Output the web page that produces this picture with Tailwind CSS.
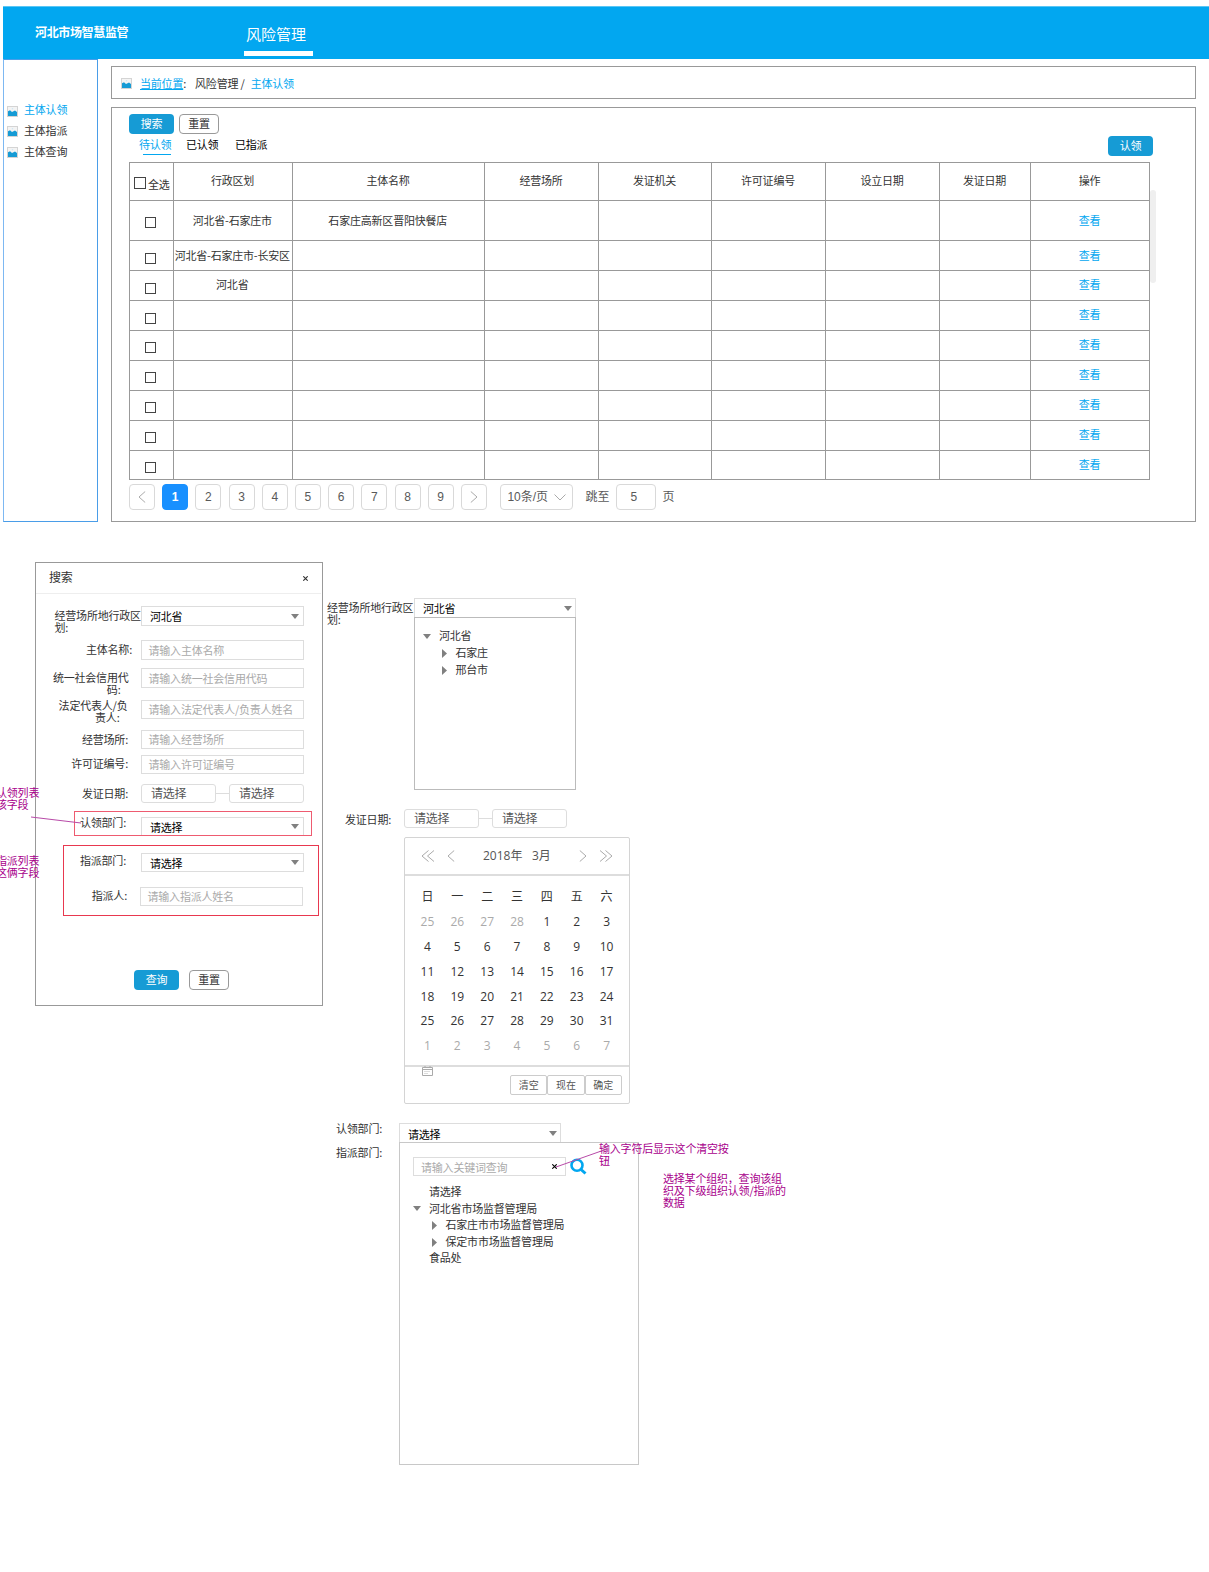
<!DOCTYPE html>
<html lang="zh-CN">
<head>
<meta charset="utf-8">
<title>风险管理 - 主体认领</title>
<script src="https://cdn.jsdelivr.net/npm/@tailwindcss/browser@4"></script>
</head>
<body class="relative h-[1572px] w-[1209px] overflow-hidden bg-white pt-[6px] font-['Noto_Sans_CJK_SC',sans-serif] text-[11px] leading-[12px] tracking-[-0.2px] text-[#333]">
<svg class="hidden">
  <symbol id="pic" viewBox="0 0 11 11"><rect x=".5" y=".5" width="10" height="10" fill="#f4f4f4" stroke="#d4d4d4"/><path d="M1 10V5.2L3 4.2 5 6 8 4.6 10 6V10Z" fill="#169bd5"/><circle cx="5.5" cy="2.8" r=".8" fill="#cfe6f2"/></symbol>
  <symbol id="down" viewBox="0 0 8 5"><path d="M0 0H8L4 5Z" fill="#808080"/></symbol>
  <symbol id="right" viewBox="0 0 5 9"><path d="M0 0V9L5 4.5Z" fill="#808080"/></symbol>
  <symbol id="chev" viewBox="0 0 8 12"><path d="M7.2.5 1 6 7.2 11.5" fill="none" stroke="#aaa"/></symbol>
  <symbol id="dchev" viewBox="0 0 14 12"><path d="M7.5.5 1 6 7.5 11.5M13 .5 6.5 6 13 11.5" fill="none" stroke="#aaa"/></symbol>
  <symbol id="x" viewBox="0 0 5 5"><path d="M.3.3 4.7 4.7M4.7.3.3 4.7" fill="none" stroke="currentColor" stroke-width="1.1"/></symbol>
</svg>

<header class="ml-[3px] flex h-[53px] border-t border-[#5ac6f5] bg-[#02a7f0] text-white">
  <div class="w-[240px] pl-8 pt-[19px] text-[12px] font-bold tracking-[-0.35px]">河北市场智慧监管</div>
  <nav class="w-[70px] pl-px pt-[17px]">
    <a class="ml-[2px] block text-[15px] leading-[20px] tracking-normal">风险管理</a>
    <span class="mt-[7px] block h-[5px] w-[69px] bg-white"></span>
  </nav>
</header>

<div class="ml-[3px] flex">
  <aside class="h-[463px] w-[95px] border border-[#4a9de8] border-l-[#7db8f2] pl-[3px] pt-[38px]">
    <ul class="flex flex-col">
      <li class="flex h-[21px] items-center text-[#02a7f0]"><svg class="mr-[6px] mt-[5px] size-[11px]"><use href="#pic"/></svg>主体认领</li>
      <li class="flex h-[21px] items-center"><svg class="mr-[6px] mt-[3px] size-[11px]"><use href="#pic"/></svg>主体指派</li>
      <li class="flex h-[21px] items-center"><svg class="mr-[6px] mt-[3px] size-[11px]"><use href="#pic"/></svg>主体查询</li>
    </ul>
  </aside>

  <main class="ml-[13px] w-[1085px] pt-[7px]">
    <div class="flex h-[33px] items-center border border-[#999] pl-[9px]">
      <svg class="mr-2 mt-px size-[11px]"><use href="#pic"/></svg>
      <span class="text-[#02a7f0] underline underline-offset-1">当前位置</span><span class="mr-2">:</span><span class="ml-px">风险管理 /</span><span class="ml-[6px] text-[#02a7f0]">主体认领</span>
    </div>

    <section class="mt-2 h-[415px] border border-[#999] pl-[17px] pt-[6px]">
      <div class="flex gap-[5px]">
        <button class="h-5 w-[45px] rounded bg-[#169bd5] pb-[3px] text-white">搜索</button>
        <button class="h-5 w-10 rounded border border-[#999] pb-[3px]">重置</button>
      </div>
      <div class="flex h-[28px] w-[1024px] items-start justify-between">
        <div class="flex gap-[6px] pl-[10px] pt-1 text-black">
          <div class="w-[41px] text-[#02a7f0]">待认领<span class="ml-1 mt-[4px] block h-px w-[28px] bg-[#02a7f0]"></span></div>
          <div class="w-[43px]">已认领</div>
          <div>已指派</div>
        </div>
        <button class="mt-[2px] h-5 w-[45px] rounded bg-[#169bd5] pb-[3px] text-white">认领</button>
      </div>

      <div class="relative w-[1021px]">
        <table class="w-[1021px] table-fixed border-collapse text-center [&_td]:border [&_td]:border-[#999] [&_td]:p-0 [&_td]:align-top [&_th]:border [&_th]:border-[#999] [&_th]:p-0 [&_th]:font-normal">
          <colgroup><col class="w-[44px]"><col class="w-[119px]"><col class="w-[192px]"><col class="w-[114px]"><col class="w-[113px]"><col class="w-[114px]"><col class="w-[114px]"><col class="w-[91px]"><col class="w-[119px]"></colgroup>
          <thead>
            <tr class="h-[38px] [&>th]:pr-px [&>th]:pb-[3px]">
              <th><span class="flex items-center pl-1 pt-[7px]"><i class="mb-[2px] mr-[2px] size-[12px] shrink-0 border border-[#444]"></i>全选</span></th>
              <th>行政区划</th><th>主体名称</th><th>经营场所</th><th>发证机关</th><th>许可证编号</th><th>设立日期</th><th>发证日期</th><th>操作</th>
            </tr>
          </thead>
          <tbody id="rows"></tbody>
        </table>
        <div class="absolute left-[1021px] top-[28px] h-[93px] w-[6px] rounded-[3px] bg-[#efefef]"></div>
      </div>

      <div class="mt-1 flex h-[26px] items-center font-['Liberation_Sans','Noto_Sans_CJK_SC',sans-serif] text-[12px] tracking-normal text-[#595959]">
        <div id="pages" class="flex gap-[7.2px]"></div>
        <div class="ml-[13.5px] flex h-[26px] w-[73px] items-center rounded border border-[#d9d9d9] pl-[6px]">10条/页<svg class="ml-[6px] h-[7px] w-3" viewBox="0 0 12 7"><path d="M.5.5 6 6 11.500.5" fill="none" stroke="#aaa"/></svg></div>
        <span class="ml-3">跳至</span>
        <div class="ml-[7px] flex h-[26px] w-10 items-center rounded border border-[#d9d9d9] pl-[13px]">5</div>
        <span class="ml-[6px]">页</span>
      </div>
    </section>
  </main>
</div>

<div class="mt-10 flex items-start">
  <section class="relative ml-[35px] h-[444px] w-[288px] border border-[#999]">
    <div class="flex h-[31px] w-[285px] items-center justify-between border-b border-[#eee] pb-[3px] pl-[13px] pr-[13px] text-[12px]"><span>搜索</span><svg class="mt-[3px] size-[5px]"><use href="#x"/></svg></div>
    <form>
      <div class="mt-3 flex h-5"><label class="w-[105px] whitespace-nowrap pl-[18.5px] pt-[3px]">经营场所地行政区<br>划<span class="mr-2">:</span></label>
        <div class="flex w-[163px] items-center justify-between border border-[#ddd] pl-2 pr-1 text-black">河北省<svg class="h-[5px] w-[8px]"><use href="#down"/></svg></div></div>
      <div class="mt-[14px] flex h-5"><label class="w-[105px] pr-px pt-[3px] text-right">主体名称<span class="mr-2">:</span></label>
        <div class="flex w-[163px] items-center border border-[#ddd] pb-px pl-[6.5px] text-[#aaa]">请输入主体名称</div></div>
      <div class="mt-2 flex h-5"><label class="w-[105px] whitespace-nowrap pr-[12.5px] pt-[3px] text-right">统一社会信用代<br>码<span class="mr-2">:</span></label>
        <div class="flex w-[163px] items-center border border-[#ddd] pb-px pl-[6.5px] text-[#aaa]">请输入统一社会信用代码</div></div>
      <div class="mt-3 flex h-[19px]"><label class="-mt-px w-[105px] whitespace-nowrap pr-[13.5px] text-right">法定代表人/负<br>责人<span class="mr-2">:</span></label>
        <div class="flex w-[163px] items-center border border-[#ddd] pb-px pl-[6.5px] text-[#aaa]">请输入法定代表人/负责人姓名</div></div>
      <div class="mt-[11px] flex h-[19px]"><label class="w-[105px] pr-[5px] pt-[3px] text-right">经营场所<span class="mr-2">:</span></label>
        <div class="flex w-[163px] items-center border border-[#ddd] pb-px pl-[6.5px] text-[#aaa]">请输入经营场所</div></div>
      <div class="mt-[6px] flex h-[19px]"><label class="w-[105px] pr-[5px] pt-[2px] text-right">许可证编号<span class="mr-2">:</span></label>
        <div class="flex w-[163px] items-center border border-[#ddd] pb-px pl-[6.5px] text-[#aaa]">请输入许可证编号</div></div>
      <div class="mt-[10px] flex h-[19px] items-center"><label class="w-[105px] pb-px pr-[5px] text-right">发证日期<span class="mr-2">:</span></label>
        <div class="flex h-[19px] w-[75px] items-center rounded-[3px] border border-[#ddd] pb-px pl-[9px] text-[12px] text-[#555]">请选择</div><i class="h-px w-[13px] bg-[#ddd]"></i><div class="flex h-[19px] w-[75px] items-center rounded-[3px] border border-[#ddd] pb-px pl-[9px] text-[12px] text-[#555]">请选择</div></div>
      <div class="mt-[14px] flex h-[19px]"><label class="-mt-px w-[105px] pr-[7px] text-right">认领部门<span class="mr-2">:</span></label>
        <div class="flex w-[163px] items-center justify-between border border-[#ddd] pl-2 pr-1 text-black">请选择<svg class="h-[5px] w-[8px]"><use href="#down"/></svg></div></div>
      <div class="mt-[17px] flex h-[19px]"><label class="w-[105px] pr-[7px] pt-px text-right">指派部门<span class="mr-2">:</span></label>
        <div class="flex w-[163px] items-center justify-between border border-[#ddd] pl-2 pr-1 text-black">请选择<svg class="h-[5px] w-[8px]"><use href="#down"/></svg></div></div>
      <div class="mt-[15px] flex h-[19px]"><label class="w-[104px] pr-[5px] pt-[2px] text-right">指派人<span class="mr-2">:</span></label>
        <div class="flex w-[163px] items-center border border-[#ddd] pb-px pl-[6.5px] text-[#aaa]">请输入指派人姓名</div></div>
      <div class="mt-16 flex gap-[10px] pl-[98px]">
        <button type="button" class="h-5 w-[45px] rounded bg-[#169bd5] pb-[3px] text-white">查询</button>
        <button type="button" class="h-5 w-10 rounded border border-[#999] pb-[3px]">重置</button>
      </div>
    </form>
    <div class="absolute left-[38px] top-[248px] h-[25px] w-[238px] border border-[#ee5b70]"></div>
    <div class="absolute left-[27px] top-[282px] h-[71px] w-[256px] border border-[#e8384f]"></div>
  </section>

  <div class="mt-9 pl-1">
    <div class="flex items-start">
      <div class="w-[87px] whitespace-nowrap pt-[3px]">经营场所地行政区<br>划<span class="mr-2">:</span></div>
      <div class="w-[162px]">
        <div class="flex h-[19px] items-center justify-between border border-b-0 border-[#ddd] pl-2 pr-[3px] text-black">河北省<svg class="h-[5px] w-[8px]"><use href="#down"/></svg></div>
        <div class="h-[173px] border border-[#bbb] pl-2 pt-[9px] leading-[17px]">
          <div class="flex items-center"><svg class="mr-2 mt-[2px] h-[5px] w-2"><use href="#down"/></svg>河北省</div>
          <div class="flex items-center pl-[19px]"><svg class="mr-[8.5px] mt-[2px] h-[9px] w-[5px]"><use href="#right"/></svg>石家庄</div>
          <div class="flex items-center pl-[19px]"><svg class="mr-[8.5px] mt-[2px] h-[9px] w-[5px]"><use href="#right"/></svg>邢台市</div>
        </div>
      </div>
    </div>

    <div class="mt-[19px] flex h-[19px] items-center"><div class="w-[77px] pl-[18px]">发证日期<span class="mr-2">:</span></div>
      <div class="flex h-[19px] w-[75px] items-center rounded-[3px] border border-[#ddd] pb-px pl-[9px] text-[12px] text-[#555]">请选择</div><i class="h-px w-[13px] bg-[#ddd]"></i><div class="flex h-[19px] w-[75px] items-center rounded-[3px] border border-[#ddd] pb-px pl-[9px] text-[12px] text-[#555]">请选择</div></div>

    <div class="ml-[77px] mt-[9px] h-[267px] w-[226px] rounded-[2px] border border-[#d4d4d4] font-['Open_Sans','Noto_Sans_CJK_SC',sans-serif] text-[12px] tracking-normal">
      <div class="flex h-[38px] items-center border-b-2 border-[#ddd] pl-4 text-[#555]">
        <svg class="h-3 w-[14px]"><use href="#dchev"/></svg>
        <svg class="ml-3 h-3 w-2"><use href="#chev"/></svg>
        <span class="ml-7 w-[49px]">2018年</span><span class="w-[47px]">3月</span>
        <svg class="h-3 w-2 rotate-180"><use href="#chev"/></svg>
        <svg class="ml-3 h-3 w-[14px] rotate-180"><use href="#dchev"/></svg>
      </div>
      <div id="cal" class="ml-[7.500px] grid h-[189px] w-[209px] auto-rows-[24.9px] grid-cols-7 pt-[9px] text-center leading-[24.9px]"></div>
      <div class="flex h-[38px] border-t-2 border-[#ddd] pl-[17px] font-['Noto_Sans_CJK_SC',sans-serif] text-[10px] text-[#555]">
        <svg class="-mt-px h-[10px] w-[11px]" viewBox="0 0 11 10"><path d="M.5 1.500H10.500V9.500H.5ZM.5 3.500H10.500M3 0V2M8 0V2" fill="none" stroke="#aaa"/><path d="M2.500 5.500H8.500M2.500 7.500H6" stroke="#bbb" stroke-dasharray="1 1"/></svg>
        <div class="ml-[77px] mt-2 flex h-5 w-[112px] [&>span]:flex-1 [&>span]:border [&>span]:border-[#ccc] [&>span]:pt-[3px] [&>span]:text-center [&>span]:rounded-[2px]"><span>清空</span><span>现在</span><span>确定</span></div>
      </div>
    </div>

    <div class="mt-[19px] flex items-start">
      <div class="-mt-px flex w-[72px] flex-col gap-3 pl-[9px]"><span>认领部门:</span><span>指派部门:</span></div>
      <div class="w-[240px]">
        <div class="flex h-[19px] w-[162px] items-center justify-between border border-b-0 border-[#ddd] pl-2 pr-[3px] pt-px text-black">请选择<svg class="h-[5px] w-[8px]"><use href="#down"/></svg></div>
        <div class="h-[323px] border border-[#c8c8c8] pl-[13px] pt-[14px]">
          <div class="flex items-center">
            <div class="flex h-[19px] w-[153px] items-center justify-between border border-[#ddd] pl-[7px] pr-2 text-[#aaa]">请输入关键词查询<svg class="size-[5px] text-black"><use href="#x"/></svg></div>
            <svg class="ml-1 size-[17px]" viewBox="0 0 17 17"><circle cx="7" cy="7.200" r="5.500" fill="none" stroke="#02a7f0" stroke-width="2.600"/><path d="M11 11.500 15.500 15.500" stroke="#02a7f0" stroke-width="3"/></svg>
          </div>
          <div class="mt-[7px] leading-[16.6px]">
            <div class="pl-4">请选择</div>
            <div class="flex items-center"><svg class="mr-2 mt-[2px] h-[5px] w-2"><use href="#down"/></svg>河北省市场监督管理局</div>
            <div class="flex items-center pl-[18.500px]"><svg class="mr-[9px] mt-[2px] h-[9px] w-[5px]"><use href="#right"/></svg>石家庄市市场监督管理局</div>
            <div class="flex items-center pl-[18.500px]"><svg class="mr-[9px] mt-[2px] h-[9px] w-[5px]"><use href="#right"/></svg>保定市市场监督管理局</div>
            <div class="pl-4">食品处</div>
          </div>
        </div>
      </div>
    </div>
  </div>
</div>

<div class="absolute left-[-4px] top-[786px] whitespace-nowrap text-[#a8008c]">认领列表<br>该字段</div>
<div class="absolute left-[-4px] top-[854px] whitespace-nowrap text-[#a8008c]">指派列表<br>这俩字段</div>
<div class="absolute left-[599px] top-[1142px] whitespace-nowrap text-[#a8008c]">输入字符后显示这个清空按<br>钮</div>
<div class="absolute left-[663px] top-[1172px] whitespace-nowrap text-[#a8008c]">选择某个组织，查询该组<br>织及下级组织认领/指派的<br>数据</div>
<svg class="absolute left-0 top-0" width="1209" height="1572" fill="none" stroke="#b84aa8"><path d="M31 817 81 823"/><path d="M556 1167 607 1149"/></svg>

<script>
const data = [
  ['河北省-石家庄市', '石家庄高新区晋阳快餐店', 40, 13, 16],
  ['河北省-石家庄市-长安区', '', 30, 8, 12],
  ['河北省', '', 30, 7, 12],
  ['', '', 30, 7, 12], ['', '', 30, 7, 11], ['', '', 30, 7, 11], ['', '', 30, 7, 11], ['', '', 30, 7, 11], ['', '', 29, 7, 11]
];
document.getElementById('rows').innerHTML = data.map(([area, name, h, pad, box]) => {
  const cell = t => `<td><div class="whitespace-nowrap pr-[1.5px]" style="padding-top:${pad}px">${t}</div></td>`;
  return `<tr style="height:${h}px"><td><i class="ml-[15px] block size-[11px] border border-[#444]" style="margin-top:${box}px"></i></td>${cell(area)}${cell(name)}${cell('').repeat(5)}<td><div class="pr-px text-[#02a7f0]" style="padding-top:${pad}px">查看</div></td></tr>`;
}).join('');

const box = 'flex size-[26px] items-center justify-center rounded border ';
const arrow = r => `<span class="${box}border-[#d9d9d9]"><svg class="h-3 w-2 ${r}"><use href="#chev"/></svg></span>`;
document.getElementById('pages').innerHTML = arrow('') +
  [1,2,3,4,5,6,7,8,9].map(n => `<span class="${box}${n === 1 ? 'border-[#1890ff] bg-[#1890ff] font-bold text-white' : 'border-[#d9d9d9]'}">${n}</span>`).join('') + arrow('rotate-180');

const days = [...'日一二三四五六', 25, 26, 27, 28];
for (let d = 1; d <= 31; d++) days.push(d);
for (let d = 1; d <= 7; d++) days.push(d);
document.getElementById('cal').innerHTML = days.map((d, i) =>
  `<span class="${(i > 6 && i < 11) || i > 41 ? 'text-[#aaa]' : 'text-[#333]'}">${d}</span>`).join('');
</script>
</body>
</html>
